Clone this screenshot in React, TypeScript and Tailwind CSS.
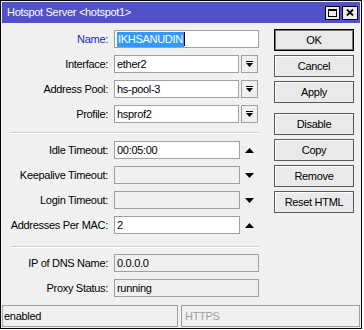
import React from "react";

const FONT = { fontFamily: '"Liberation Sans", Arial, sans-serif' };

function DropIcon() {
  return (
    <svg width="7" height="7" viewBox="0 0 7 7">
      <rect x="0" y="0" width="7" height="1" fill="#000" />
      <polygon points="0,2 7,2 3.5,6" fill="#000" />
    </svg>
  );
}

function Tri({ up }: { up?: boolean }) {
  return (
    <svg width="9" height="5" viewBox="0 0 9 5">
      {up ? <polygon points="0,5 9,5 4.5,0" fill="#000" /> : <polygon points="0,0 9,0 4.5,5" fill="#000" />}
    </svg>
  );
}

function Label({ text, blue }: { text: string; blue?: boolean }) {
  return (
    <div className={`w-[106px] text-right shrink-0 ${blue ? "text-[#2222dd]" : "text-black"}`}>{text}</div>
  );
}

function Input({ value, w, disabled, children }: { value?: string; w: string; disabled?: boolean; children?: React.ReactNode }) {
  return (
    <div
      className={`${w} h-[18px] border border-[#a0a0a0] flex items-center pl-[2px] overflow-hidden ${disabled ? "bg-[#f0f0f0]" : "bg-white"}`}
    >
      {children ?? value}
    </div>
  );
}

function Row({ label, blue, children }: { label: string; blue?: boolean; children: React.ReactNode }) {
  return (
    <div className="flex items-center h-[18px]">
      <Label text={label} blue={blue} />
      <div className="ml-[6px] flex items-center">{children}</div>
    </div>
  );
}

function DropRow({ label, value }: { label: string; value: string }) {
  return (
    <Row label={label}>
      <Input w="w-[125px]" value={value} />
      <div className="ml-[2px] w-[17px] h-[18px] border border-[#a0a0a0] bg-[#f0f0f0] flex items-center justify-center">
        <DropIcon />
      </div>
    </Row>
  );
}

function SpinRow({ label, value, up, disabled }: { label: string; value?: string; up?: boolean; disabled?: boolean }) {
  return (
    <Row label={label}>
      <Input w="w-[126px]" value={value} disabled={disabled} />
      <div className="w-[19px] h-[18px] flex items-center justify-center">
        <Tri up={up} />
      </div>
    </Row>
  );
}

function Btn({ text, def, cls = "" }: { text: string; def?: boolean; cls?: string }) {
  return (
    <div
      className={`w-[80px] h-[22px] flex items-center justify-center bg-[#e9e9e9] ${
        def ? "border border-black shadow-[inset_0_0_0_1px_#707070]" : "border border-[#5a5a5a] shadow-[inset_1px_1px_0_0_#ffffff]"
      } ${cls}`}
    >
      {text}
    </div>
  );
}

function Sep({ cls }: { cls: string }) {
  return <div className={`ml-[8px] w-[249px] h-[2px] border-t border-[#d0d0d0] border-b border-b-white ${cls}`} />;
}

export default function App() {
  return (
    <div className="w-[364px] h-[330px] bg-white text-[11px] tracking-[-0.3px] leading-none" style={FONT}>
      <div className="w-[362px] h-[329px] border border-black bg-[#f0f0f0] p-px flex flex-col">
        <div className="h-[21px] bg-[#5151c9] flex items-center pl-[5px] pr-[2px] text-white shrink-0">
          <span className="flex-1">Hotspot Server &lt;hotspot1&gt;</span>
          <div className="w-[15px] h-[14px] bg-[#ececec] border border-black flex items-center justify-center">
            <div className="w-[9px] h-[8px] border border-black border-t-2" />
          </div>
          <div className="ml-[2px] w-[16px] h-[14px] bg-[#ececec] border border-black flex items-center justify-center">
            <svg width="8" height="7" viewBox="0 0 8 7">
              <path d="M1 0.5 L7 6.5 M7 0.5 L1 6.5" stroke="#000" strokeWidth="1.8" />
            </svg>
          </div>
        </div>
        <div className="flex-1 flex">
          <div className="w-[262px] flex flex-col pt-[7px]">
            <div className="flex flex-col gap-[7px]">
              <Row label="Name:" blue>
                <Input w="w-[145px]">
                  <span className="bg-[#3399ff] text-white h-[15px] flex items-center px-px">IKHSANUDIN</span>
                  <span className="w-px h-[14px] bg-black" />
                </Input>
              </Row>
              <DropRow label="Interface:" value="ether2" />
              <DropRow label="Address Pool:" value="hs-pool-3" />
              <DropRow label="Profile:" value="hsprof2" />
            </div>
            <Sep cls="mt-[9px]" />
            <div className="flex flex-col gap-[7px] mt-[7px]">
              <SpinRow label="Idle Timeout:" value="00:05:00" up />
              <SpinRow label="Keepalive Timeout:" disabled />
              <SpinRow label="Login Timeout:" disabled />
              <SpinRow label="Addresses Per MAC:" value="2" up />
            </div>
            <Sep cls="mt-[12px]" />
            <div className="flex flex-col gap-[7px] mt-[6px]">
              <Row label="IP of DNS Name:">
                <Input w="w-[145px]" value="0.0.0.0" disabled />
              </Row>
              <Row label="Proxy Status:">
                <Input w="w-[145px]" value="running" disabled />
              </Row>
            </div>
          </div>
          <div className="ml-[10px] flex flex-col pt-[6px] gap-[4px]">
            <Btn text="OK" def />
            <Btn text="Cancel" />
            <Btn text="Apply" />
            <Btn text="Disable" cls="mt-[6px]" />
            <Btn text="Copy" />
            <Btn text="Remove" />
            <Btn text="Reset HTML" />
          </div>
        </div>
        <div className="h-[22px] flex gap-[3px] shrink-0">
          <div className="w-[176px] border border-[#a0a0a0] flex items-center pl-[1px]">enabled</div>
          <div className="flex-1 border border-[#a0a0a0] flex items-center pl-[3px] text-[#a0a0a0]">HTTPS</div>
        </div>
      </div>
    </div>
  );
}
